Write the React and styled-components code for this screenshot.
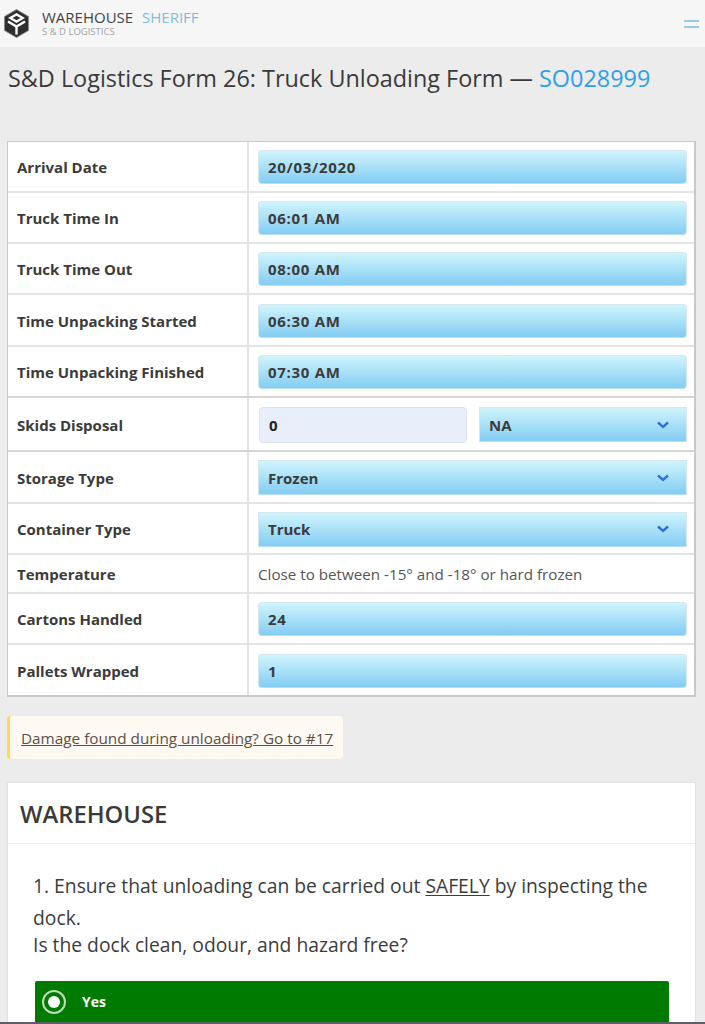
import React from "react"
import styled, { createGlobalStyle } from "styled-components"

const GlobalStyle = createGlobalStyle`
  html, body {
    margin: 0;
    padding: 0;
    height: 1024px;
    overflow: hidden;
    background: #ececec;
    font-family: "Open Sans", "Liberation Sans", sans-serif;
    color: #333333;
  }
  * { box-sizing: border-box; }
`

const Page = styled.div`
  width: 705px;
  height: 1024px;
  overflow: hidden;
  position: relative;
`

const Header = styled.header`
  height: 47px;
  background: #f6f6f6;
  display: flex;
  align-items: center;
  justify-content: space-between;
  padding: 0 6px 0 4px;
`

const Brand = styled.div`
  display: flex;
  align-items: center;
  gap: 13px;
`

const BrandText = styled.div`
  display: flex;
  flex-direction: column;
  margin-top: -3px;
`

const BrandName = styled.div`
  font-size: 15px;
  line-height: 18px;
  color: #444444;
  span { color: #7cc0dc; margin-left: 5px; }
`

const BrandSub = styled.div`
  font-size: 9.5px;
  line-height: 11px;
  color: #a5a5a5;
`

const Burger = styled.div`
  width: 15px;
  height: 8px;
  border-top: 2px solid #8fd0e6;
  border-bottom: 2px solid #8fd0e6;
`

const Title = styled.h1`
  margin: 0;
  padding: 16px 8px 0;
  height: 94px;
  font-size: 23.4px;
  line-height: 30px;
  font-weight: 400;
  color: #3a3a3a;
  a { color: #2f9fe8; text-decoration: none; }
`

const Table = styled.div`
  margin: 0 9px 0 7px;
  background: #ffffff;
  border: 2px solid #c9c9c9;
  border-width: 1px 2px 2px 1px;
`

const Row = styled.div`
  display: grid;
  grid-template-columns: 241px 1fr;
  height: ${(p) => p.$h}px;
  border-bottom: ${(p) => (p.$last ? "0" : `2px solid ${p.$strong ? "#d6d6d6" : "#e4e4e4"}`)};
`

const Label = styled.div`
  display: flex;
  align-items: center;
  padding: 1px 0 0 9px;
  font-size: 15px;
  font-weight: 700;
  color: #3b3b3b;
  border-right: 2px solid #e4e4e4;
`

const Value = styled.div`
  display: flex;
  align-items: center;
  gap: 12px;
  padding: 1px 7px 0 9px;
  font-size: 15.2px;
  color: #555555;
`

const Field = styled.div`
  flex: 1;
  height: ${(p) => (p.$select ? "35px" : "34px")};
  display: flex;
  align-items: center;
  justify-content: space-between;
  padding: 0 17px 0 9px;
  font-size: 15px;
  font-weight: 700;
  letter-spacing: ${(p) => (p.$select ? "0" : "0.7px")};
  color: #3b3b3b;
  background: linear-gradient(#d0f4fd, #83cdf3);
  border: 1px solid #d4e6ee;
  border-bottom-color: #b8dff2;
  border-radius: ${(p) => (p.$select ? "1px" : "4px")};
`

const PlainInput = styled.div`
  flex: 0 0 208px;
  height: 36px;
  margin-left: 1px;
  display: flex;
  align-items: center;
  padding: 0 9px;
  font-size: 15px;
  font-weight: 700;
  color: #222222;
  background: #e8effb;
  border: 1px solid #dde3ea;
  border-radius: 4px;
`

const Notice = styled.div`
  display: block;
  width: 336px;
  margin: 19px 0 0 7px;
  height: 43px;
  line-height: 45px;
  padding-left: 11px;
  font-size: 15.3px;
  white-space: nowrap;
  color: #5a5147;
  background: #fefaf3;
  border-left: 3px solid #ffd75e;
  border-radius: 4px;
  text-decoration: underline;
`

const Card = styled.section`
  margin: 23px 9px 0 7px;
  background: #ffffff;
  border: 1px solid #e2e2e2;
  height: 400px;
`

const CardHeader = styled.h2`
  margin: 0;
  height: 61px;
  padding: 1px 0 0 12px;
  display: flex;
  align-items: center;
  font-size: 23.8px;
  font-weight: 600;
  color: #3a3a3a;
  border-bottom: 1px solid #ededed;
`

const CardBody = styled.div`
  padding: 26px 26px 0 25px;
`

const Question = styled.div`
  font-size: 19.3px;
  color: #3c3c3c;
  u { text-underline-offset: 2px; }
`

const QuestionLine = styled.p`
  margin: 0;
  line-height: ${(p) => p.$lh}px;
`

const YesOption = styled.div`
  height: 80px;
  margin: 25px 0 0 2px;
  background: #007b00;
  border-radius: 2px;
  display: flex;
  align-items: flex-start;
  padding: 9px 0 0 7px;
  gap: 16px;
  font-size: 14px;
  font-weight: 700;
  line-height: 24px;
  color: #ffffff;
`

const Radio = styled.span`
  width: 24px;
  height: 24px;
  border: 2px solid #b9dcb9;
  border-radius: 50%;
  display: flex;
  align-items: center;
  justify-content: center;
  &::after {
    content: "";
    width: 12px;
    height: 12px;
    border-radius: 50%;
    background: #ffffff;
  }
`

const BottomEdge = styled.div`
  position: absolute;
  left: 0;
  right: 0;
  bottom: 0;
  height: 2px;
  background: #5a6066;
`

const Logo = () => (
  <svg width="25" height="29" viewBox="0 0 25 29">
    <path d="M12.5 0.5 24.5 7.5V21.5L12.5 28.5 0.5 21.5V7.5Z" fill="#2f2f2f" stroke="#8a8a8a" />
    <path d="M12.5 4 21 9 12.5 14 4 9Z" fill="#ffffff" />
    <path d="M12.5 6.8 16.5 9 12.5 11.3 8.5 9Z" fill="#2f2f2f" />
    <path d="M4 12.5 12.5 17.5 21 12.5" fill="none" stroke="#ffffff" strokeWidth="2.4" />
    <path d="M12.5 16.5V25.5" fill="none" stroke="#ffffff" strokeWidth="2.4" />
  </svg>
)

const Chevron = () => (
  <svg width="12" height="8" viewBox="0 0 12 8">
    <path d="M1 1.5 6 6 11 1.5" fill="none" stroke="#2f6fdc" strokeWidth="2.4" />
  </svg>
)

const rows = [
  { label: "Arrival Date", value: "20/03/2020", h: 51 },
  { label: "Truck Time In", value: "06:01 AM", h: 51 },
  { label: "Truck Time Out", value: "08:00 AM", h: 51 },
  { label: "Time Unpacking Started", value: "06:30 AM", h: 52 },
  { label: "Time Unpacking Finished", value: "07:30 AM", h: 51, strong: true },
  { label: "Skids Disposal", skids: true, h: 54, strong: true },
  { label: "Storage Type", value: "Frozen", select: true, h: 52 },
  { label: "Container Type", value: "Truck", select: true, h: 51 },
  { label: "Temperature", text: "Close to between -15° and -18° or hard frozen", h: 39 },
  { label: "Cartons Handled", value: "24", h: 51 },
  { label: "Pallets Wrapped", value: "1", h: 50, last: true },
]

const App = () => {
  return (
    <Page>
      <GlobalStyle />
      <Header>
        <Brand>
          <Logo />
          <BrandText>
            <BrandName>
              WAREHOUSE <span>SHERIFF</span>
            </BrandName>
            <BrandSub>S &amp; D LOGISTICS</BrandSub>
          </BrandText>
        </Brand>
        <Burger />
      </Header>
      <Title>
        S&amp;D Logistics Form 26: Truck Unloading Form — <a href="#so">SO028999</a>
      </Title>
      <Table>
        {rows.map((r) => (
          <Row key={r.label} $h={r.h} $last={r.last} $strong={r.strong}>
            <Label>{r.label}</Label>
            <Value>
              {r.skids && (
                <>
                  <PlainInput>0</PlainInput>
                  <Field $select>
                    NA <Chevron />
                  </Field>
                </>
              )}
              {r.value && (
                <Field $select={r.select}>
                  {r.value}
                  {r.select && <Chevron />}
                </Field>
              )}
              {r.text}
            </Value>
          </Row>
        ))}
      </Table>
      <Notice>Damage found during unloading? Go to #17</Notice>
      <Card>
        <CardHeader>WAREHOUSE</CardHeader>
        <CardBody>
          <Question>
            <QuestionLine $lh={32}>
              1. Ensure that unloading can be carried out <u>SAFELY</u> by inspecting the dock.
            </QuestionLine>
            <QuestionLine $lh={22}>Is the dock clean, odour, and hazard free?</QuestionLine>
          </Question>
          <YesOption>
            <Radio />
            Yes
          </YesOption>
        </CardBody>
      </Card>
      <BottomEdge />
    </Page>
  )
}

export default App
